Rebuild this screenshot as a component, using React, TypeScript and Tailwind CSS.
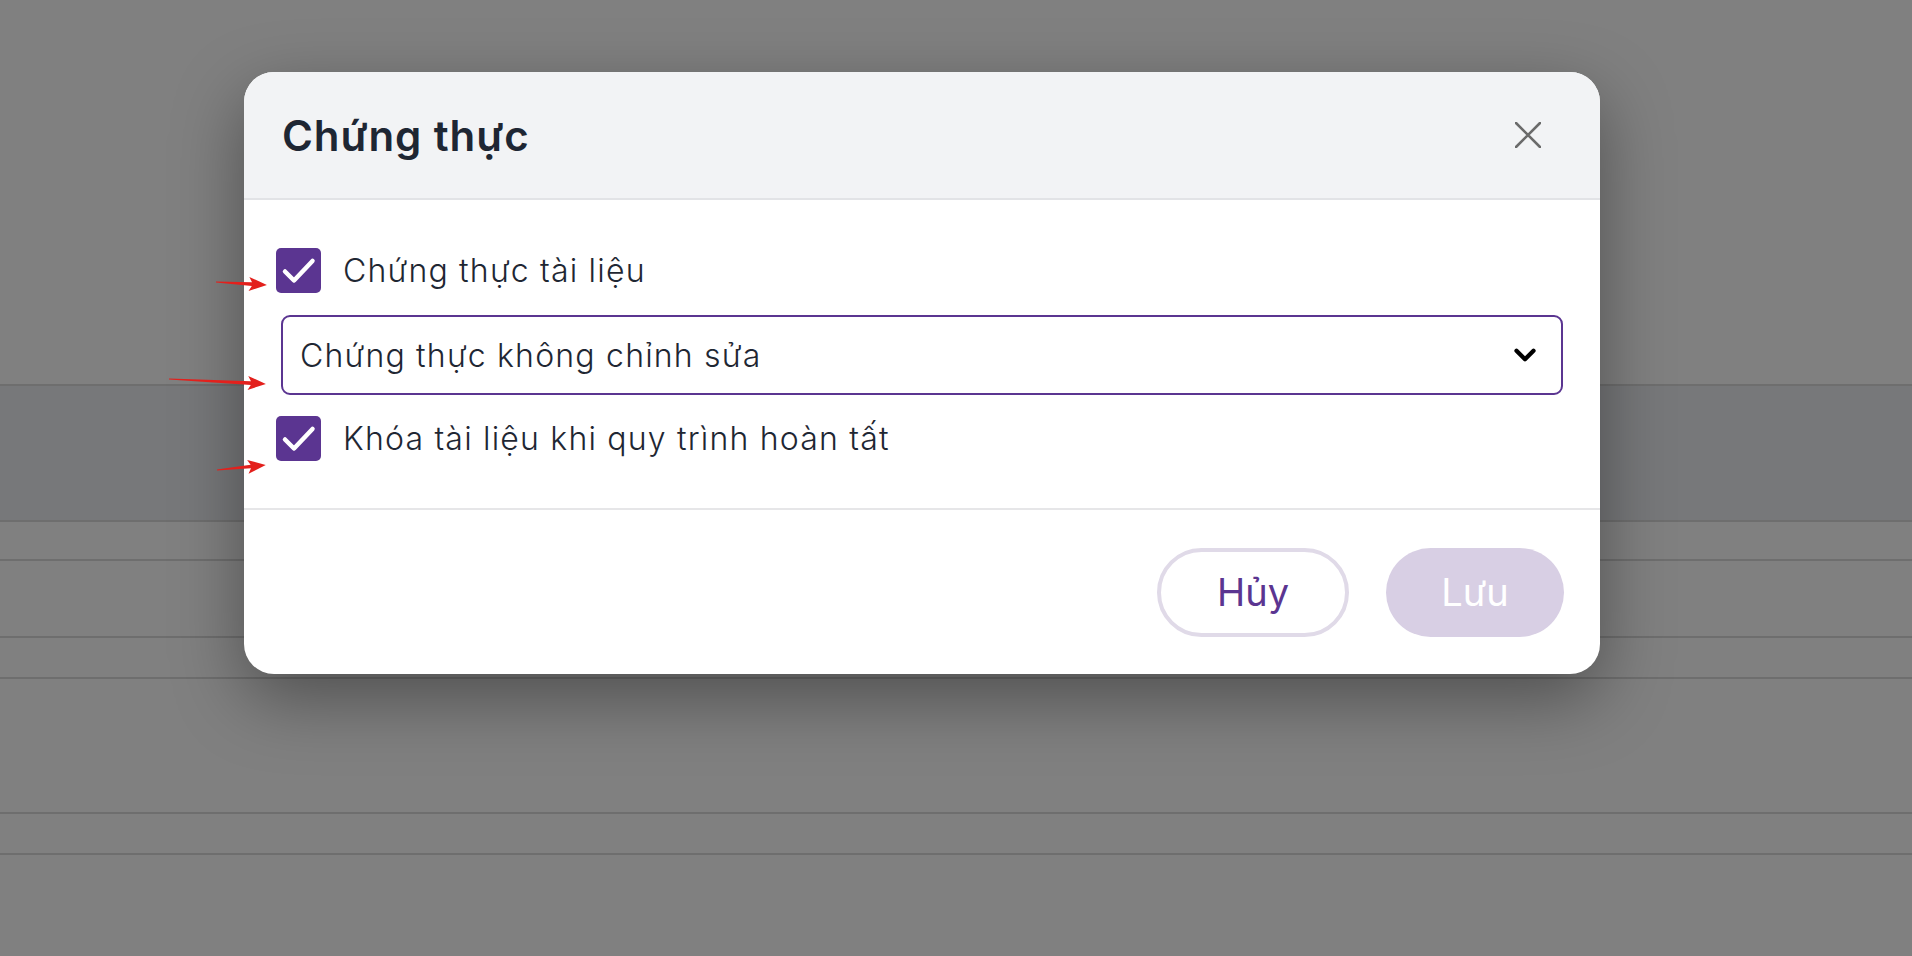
import { ChevronDown } from "lucide-react";

const FONT = "font-['Inter','Noto_Sans',sans-serif]";

// red annotation arrows drawn on top of the screenshot
const ARROWS = [
  { x: 216, y: 282, len: 51, angle: 3.4 },
  { x: 169, y: 379, len: 97, angle: 2.9 },
  { x: 217, y: 470, len: 49, angle: -5.8 },
];

function Check({ label }: { label: string }) {
  return (
    <label className="flex h-[45px] items-center gap-[22px] pl-[32px] cursor-pointer">
      <span className="flex h-[45px] w-[45px] items-center justify-center rounded-[5px] bg-[#5b3591]">
        <svg viewBox="0 0 45 45" className="h-[45px] w-[45px]">
          <polyline
            points="9,23.5 18,32.5 36.5,13"
            fill="none"
            stroke="#fff"
            strokeWidth="4.5"
            strokeLinecap="round"
            strokeLinejoin="round"
          />
        </svg>
      </span>
      <span className="text-[32px] leading-[45px] font-light text-[#1f2733] tracking-[1.2px]">{label}</span>
    </label>
  );
}

export default function App() {
  return (
    <div className={`relative h-[956px] w-full overflow-hidden bg-[#808080] ${FONT}`}>
      {/* page behind the overlay */}
      <div className="h-[384px]" />
      <div className="h-[138px] border-y-2 border-[#6e6e6e] bg-[#77787a]" />
      <div className="h-[37px]" />
      <div className="h-[79px] border-y-2 border-[#6e6e6e]" />
      <div className="h-[39px]" />
      <div className="h-[137px] border-y-2 border-[#6e6e6e]" />
      <div className="h-[39px]" />
      <div className="h-[103px] border-t-2 border-[#6e6e6e]" />

      {/* dialog */}
      <div className="absolute left-[244px] top-[72px] w-[1356px] overflow-hidden rounded-[30px] bg-white shadow-[0_24px_70px_rgba(0,0,0,0.38)]">
        <div className="flex h-[128px] items-center justify-between border-b-2 border-[#e2e3e6] bg-[#f2f3f5] pl-[38px] pr-[59px]">
          <h2 className="text-[42px] font-semibold text-[#1e2633] tracking-[0.9px]">Chứng thực</h2>
          <svg viewBox="0 0 26 26" className="h-[26px] w-[26px]">
            <path d="M1 1L25 25M25 1L1 25" stroke="#6b6b6b" strokeWidth="2.6" strokeLinecap="round" />
          </svg>
        </div>

        <div className="flex flex-col pt-[48px] pb-[47px] border-b-2 border-[#e6e6e8]">
          <Check label="Chứng thực tài liệu" />
          <div className="mx-[37px] mt-[22px] mb-[21px] flex h-[80px] items-center justify-between rounded-[9px] border-2 border-[#5b3591] pl-[17px] pr-[19px]">
            <span className="text-[32px] leading-[45px] font-light text-[#1f2733] tracking-[1.2px]">Chứng thực không chỉnh sửa</span>
            <ChevronDown className="h-[34px] w-[34px] text-black" strokeWidth={3} />
          </div>
          <Check label="Khóa tài liệu khi quy trình hoàn tất" />
        </div>

        <div className="flex h-[164px] items-center justify-end gap-[37px] pr-[36px]">
          <button className="h-[89px] w-[192px] rounded-full border-4 border-[#e0dae8] text-[38px] text-[#5b3591]">
            Hủy
          </button>
          <button className="h-[89px] w-[178px] rounded-full bg-[#d8cfe4] text-[38px] text-white">
            Lưu
          </button>
        </div>
      </div>

      <svg className="pointer-events-none absolute left-0 top-0" width="400" height="600">
        {ARROWS.map((a, i) => (
          <polygon
            key={i}
            transform={`translate(${a.x} ${a.y}) rotate(${a.angle})`}
            points={`0,-0.5 ${a.len - 15},-1.8 ${a.len - 18},-7 ${a.len},0 ${a.len - 18},7 ${a.len - 15},1.8 0,0.5`}
            fill="#e3201c"
          />
        ))}
      </svg>
    </div>
  );
}
